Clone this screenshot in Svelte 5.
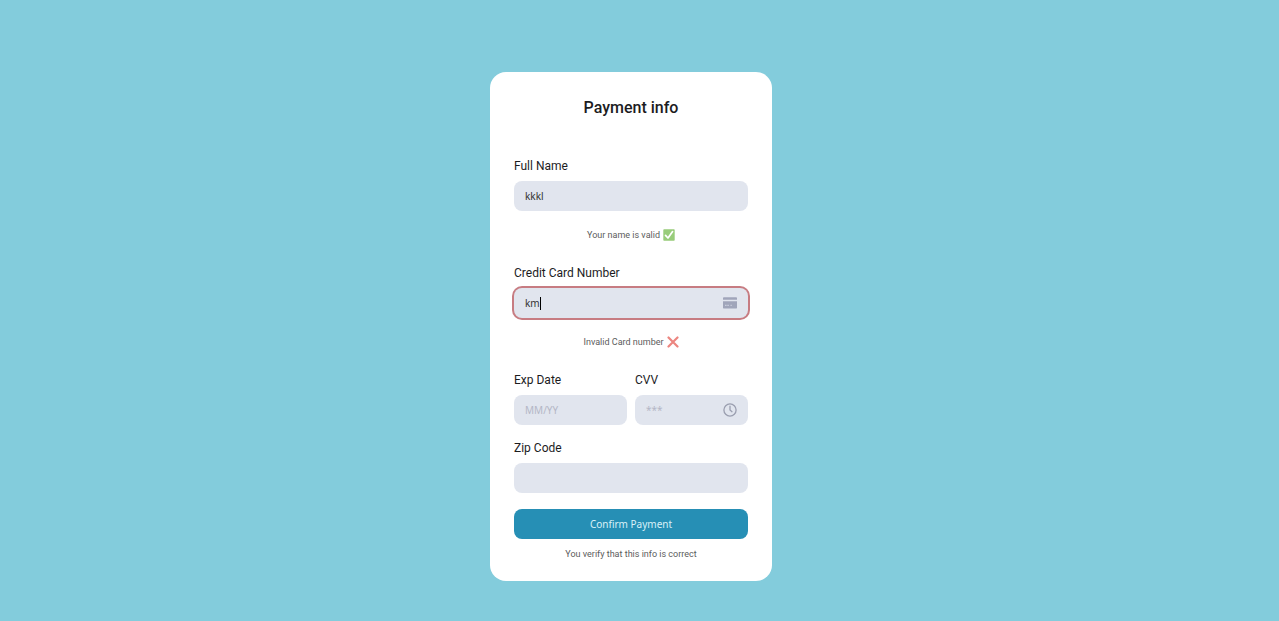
<script>
  let name = $state('kkkl');
  let cardNumber = $state('km');
  let expiry = $state('');
  let cvv = $state('');
  let zip = $state('');
</script>

<main>
  <form onsubmit={(e) => e.preventDefault()}>
    <h1>Payment info</h1>

    <div class="field">
      <label for="name">Full Name</label>
      <input id="name" type="text" bind:value={name} />
      <p class="hint">
        Your name is valid
        <svg viewBox="0 0 12 12" role="img" aria-label="valid">
          <rect x="0.3" y="0.3" width="11.4" height="11.4" rx="0.8" fill="#98cc7a" />
          <path d="M2.5 6.3 5 9 9.6 2.6" fill="none" stroke="#fff" stroke-width="1.7" stroke-linecap="round" stroke-linejoin="round" />
        </svg>
      </p>
    </div>

    <div class="field">
      <label for="card">Credit Card Number</label>
      <div class="control invalid">
        <input id="card" type="text" aria-invalid="true" bind:value={cardNumber} />
        <span class="caret" aria-hidden="true">{cardNumber}</span>
        <svg class="icon" viewBox="0 0 16 16" aria-hidden="true">
          <path d="M1.500 2.300h13l.5.5v1.900H1V2.800Z" fill="#a0a5ba" />
          <path d="M1 6.200h14v6.900l-.5.500h-13L1 13.100Z" fill="#a0a5ba" />
          <path d="M3 10.300h1.600M5.300 10.300h1.600M8.500 10.300h1.300" stroke="#d3d7e4" stroke-width="1" />
        </svg>
      </div>
      <p class="hint">
        Invalid Card number
        <svg viewBox="0 0 12 12" role="img" aria-label="invalid">
          <path d="M1.500 1.500 10.500 10.500M10.500 1.500 1.500 10.500" stroke="#ec8680" stroke-width="2.200" stroke-linecap="round" />
        </svg>
      </p>
    </div>

    <div class="pair">
      <div class="field">
        <label for="exp">Exp Date</label>
        <input id="exp" type="text" placeholder="MM/YY" bind:value={expiry} />
      </div>
      <div class="field">
        <label for="cvv">CVV</label>
        <div class="control">
          <input id="cvv" type="text" placeholder="***" bind:value={cvv} />
          <svg class="icon" viewBox="0 0 16 16" fill="none" stroke="#9a9eaf" stroke-width="1.300" stroke-linecap="round" aria-hidden="true">
            <circle cx="8" cy="8" r="6.100" />
            <path d="M8 4.200V8l2 1.700" />
          </svg>
        </div>
      </div>
    </div>

    <div class="field zip">
      <label for="zip">Zip Code</label>
      <input id="zip" type="text" bind:value={zip} />
    </div>

    <button type="submit">Confirm Payment</button>
    <p class="note">You verify that this info is correct</p>
  </form>
</main>

<style>
  :global(body) {
    margin: 0;
    background: #83ccdc;
  }

  main {
    box-sizing: border-box;
    min-height: 100vh;
    display: flex;
    justify-content: center;
    align-items: flex-start;
    padding: 72px 17px 40px 0;
    font-family: Roboto, sans-serif;
    color: #1c1c1e;
  }

  form {
    box-sizing: border-box;
    width: 100%;
    max-width: 282px;
    padding: 24px 24px 20px;
    border-radius: 16px;
    background: #fff;
  }

  h1 {
    margin: 0 0 38px;
    font-size: 16px;
    line-height: 24px;
    font-weight: 500;
    text-align: center;
  }

  .field {
    display: flex;
    flex-direction: column;
  }

  label {
    margin-bottom: 7px;
    font-size: 12px;
    line-height: 16px;
  }

  input,
  .caret,
  button {
    font-family: 'Noto Sans', sans-serif;
    font-size: 10px;
    line-height: 16px;
  }

  input {
    box-sizing: border-box;
    width: 100%;
    height: 30px;
    margin: 0;
    padding: 0 11px;
    border: 0;
    border-radius: 8px;
    outline: 0;
    background: #e1e5ee;
    color: #333;
  }

  input::placeholder {
    color: #b4b7c6;
    opacity: 1;
  }

  .control {
    position: relative;
    display: flex;
    align-items: center;
  }

  .invalid input {
    box-shadow: 0 0 0 2px #c77c82;
    caret-color: transparent;
  }

  .caret {
    position: absolute;
    left: 11px;
    height: 13px;
    line-height: 13px;
    border-right: 1px solid #000;
    color: transparent;
    pointer-events: none;
  }

  .icon {
    position: absolute;
    right: 10px;
    width: 16px;
    height: 16px;
    pointer-events: none;
  }

  .hint,
  .note {
    margin: 0;
    font-size: 9px;
    line-height: 14px;
    color: #5c5c5c;
    text-align: center;
  }

  .hint {
    display: flex;
    justify-content: center;
    align-items: center;
    gap: 3px;
    margin: 17px 0 23px;
  }

  .hint svg {
    width: 12px;
    height: 12px;
  }

  .pair {
    display: grid;
    grid-template-columns: 1fr 1fr;
    gap: 8px;
  }

  .zip {
    margin: 15px 0 16px;
  }

  button {
    display: block;
    width: 100%;
    height: 30px;
    padding: 0;
    border: 0;
    border-radius: 8px;
    background: #268fb5;
    color: #d9f1f8;
  }

  .note {
    margin-top: 8px;
  }
</style>
